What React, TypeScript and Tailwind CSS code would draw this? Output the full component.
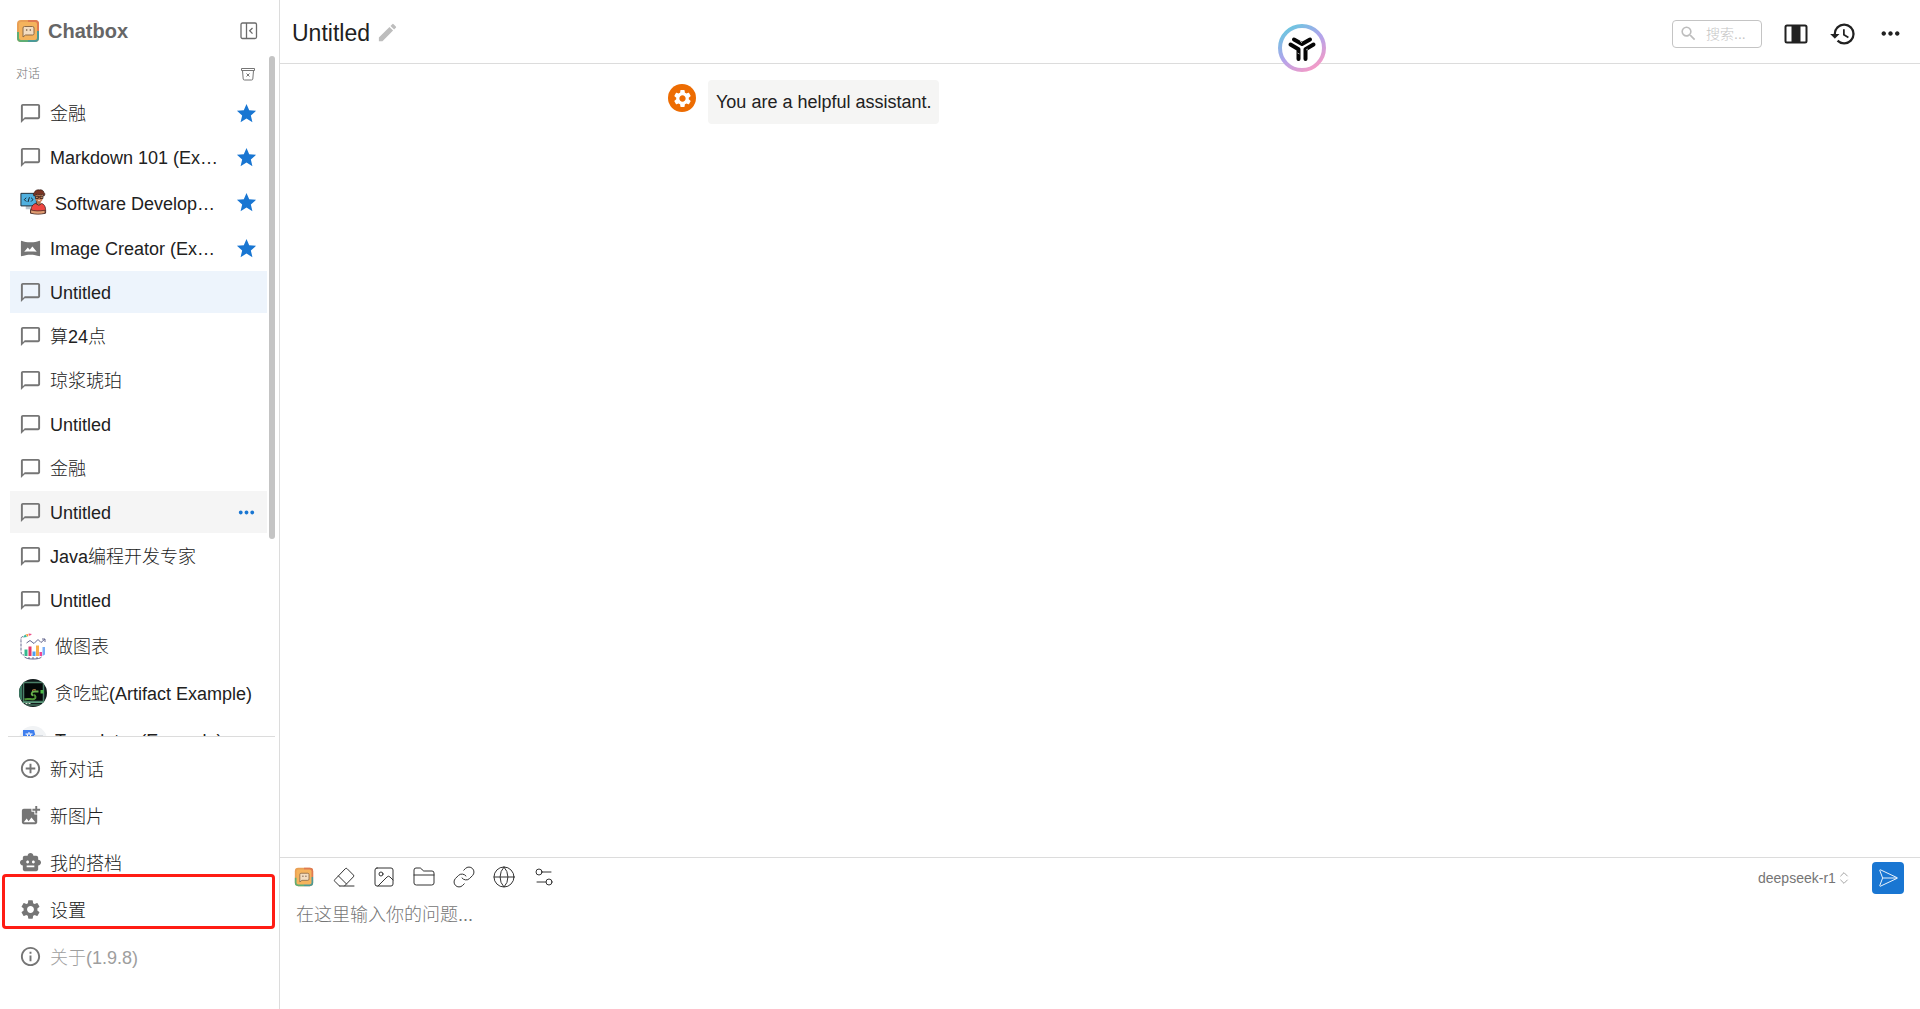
import { useState } from "react";
import clsx from "clsx";
import {
  ChevronsUpDown,
  FolderClosed,
  Globe,
  Image as ImageIcon,
  Link,
  SendHorizontal,
  Settings2,
} from "lucide-react";
import {
  MdAddCircleOutline,
  MdAddPhotoAlternate,
  MdEdit,
  MdHistory,
  MdInfoOutline,
  MdMoreHoriz,
  MdOutlineChatBubbleOutline,
  MdSearch,
  MdSettings,
  MdSmartToy,
  MdStar,
  MdVrpano,
} from "react-icons/md";

type SessionIcon = "chat" | "picture" | "developer" | "chart" | "snake" | "translate";

interface Session {
  id: number;
  name: string;
  icon: SessionIcon;
  starred?: boolean;
}

const SESSIONS: Session[] = [
  { id: 1, name: "金融", icon: "chat", starred: true },
  { id: 2, name: "Markdown 101 (Example)", icon: "chat", starred: true },
  { id: 3, name: "Software Developer (Example)", icon: "developer", starred: true },
  { id: 4, name: "Image Creator (Example)", icon: "picture", starred: true },
  { id: 5, name: "Untitled", icon: "chat" },
  { id: 6, name: "算24点", icon: "chat" },
  { id: 7, name: "琼浆琥珀", icon: "chat" },
  { id: 8, name: "Untitled", icon: "chat" },
  { id: 9, name: "金融", icon: "chat" },
  { id: 10, name: "Untitled", icon: "chat" },
  { id: 11, name: "Java编程开发专家", icon: "chat" },
  { id: 12, name: "Untitled", icon: "chat" },
  { id: 13, name: "做图表", icon: "chart" },
  { id: 14, name: "贪吃蛇(Artifact Example)", icon: "snake" },
  { id: 15, name: "Translator (Example)", icon: "translate" },
];

const MENU = [
  { label: "新对话", Icon: MdAddCircleOutline },
  { label: "新图片", Icon: MdAddPhotoAlternate },
  { label: "我的搭档", Icon: MdSmartToy },
  { label: "设置", Icon: MdSettings, marked: true },
  { label: "关于(1.9.8)", Icon: MdInfoOutline, muted: true },
];

function Logo({ size }: { size: number }) {
  return (
    <svg width={size} height={size} viewBox="0 0 24 24" fill="none" aria-hidden="true">
      <rect x="1" y="1" width="22" height="22" rx="4" fill="#e9a055" />
      <path d="M12 1h7a4 4 0 0 1 4 4v7h-4V5h-7z" fill="#df7a52" />
      <path d="M1 13h3v7h8v3H5a4 4 0 0 1-4-4z" fill="#5fae74" />
      <path d="M12 20h8v-8h3v7a4 4 0 0 1-4 4h-7z" fill="#4a9a98" />
      <rect x="3" y="3" width="18" height="18" rx="2" fill="#f5b35c" />
      <path
        d="M8.500 7.500h8a1.500 1.500 0 0 1 1.500 1.500v5.500a1.500 1.500 0 0 1-1.500 1.500H9.500L7 18V9a1.500 1.500 0 0 1 1.500-1.500z"
        fill="#f3dcc0"
        stroke="#8c6a48"
      />
      <circle cx="10.700" cy="11" r=".8" fill="#6b5038" />
      <circle cx="14.300" cy="11" r=".8" fill="#6b5038" />
    </svg>
  );
}

function CollapseIcon() {
  return (
    <svg width="18" height="18" viewBox="0 0 18 18" fill="none" stroke="#6b6b6b" strokeWidth="1.300" aria-hidden="true">
      <rect x="1" y="1" width="15.500" height="15.500" rx="1.500" />
      <path d="M6.500 1v15.500" />
      <path d="m12.500 6-2.800 2.800 2.800 2.800" />
    </svg>
  );
}

function ClearIcon() {
  return (
    <svg width="16" height="16" viewBox="0 0 16 16" fill="none" stroke="#757575" aria-hidden="true">
      <path d="M1.500 2.500h13v2h-13z" />
      <path d="m2.500 4.500.7 8.500a1.200 1.200 0 0 0 1.200 1h7.200a1.200 1.200 0 0 0 1.200-1l.7-8.500" />
      <path d="m6.500 7.500 3 3m0-3-3 3" />
    </svg>
  );
}

function EraserIcon() {
  return (
    <svg width="24" height="24" viewBox="0 0 24 24" fill="none" stroke="currentColor" strokeLinejoin="round" strokeLinecap="round" aria-hidden="true">
      <path d="M7.500 21 2.700 16.200a1 1 0 0 1 0-1.400L13.300 3.700a1.300 1.300 0 0 1 1.800 0l6.300 6.300a1.300 1.300 0 0 1 0 1.800L12.500 21" />
      <path d="M22 21H7.500M6.500 11l8 8" />
    </svg>
  );
}

function ColumnsIcon() {
  return (
    <svg width="24" height="20" viewBox="0 0 24 20" fill="none" aria-hidden="true">
      <rect x="1.500" y="1.500" width="21" height="17" rx="1.500" stroke="#212121" strokeWidth="2" />
      <path d="M7.500 1.500h9v17h-9z" fill="#212121" />
    </svg>
  );
}

function DeveloperAvatar() {
  return (
    <svg width="28" height="28" viewBox="-1 0 29 29" aria-hidden="true">
      <path d="M6 17h5v4H6z" fill="#b9c4cc" />
      <path d="M1 4.500h16v13H1z" fill="#4fb0df" stroke="#1d2a35" strokeWidth="1" />
      <path d="m6.500 9-2 2 2 2m5-4 2 2-2 2M9.800 8.500l-1.500 5" fill="none" stroke="#15242f" />
      <path d="M17.500 12h4v5h-4z" fill="#b9744c" />
      <path d="M11 25c0-6 2-9.500 5.500-10l3 2 3-2c3.500 1 4.500 5 4 10z" fill="#ef4540" stroke="#331a18" strokeWidth=".8" />
      <path d="M11 21.500c4 1.500 9 1.500 15 .5v3.200c-5 1.200-10 1.300-15-.2z" fill="#e09c72" stroke="#331a18" strokeWidth=".7" />
      <path d="M16 5.500h7.500V10c0 2-1.700 3.500-3.700 3.500S16 12 16 10z" fill="#c9825a" />
      <path d="M15 7.500c-1.500-1-1.500-3 0-4C15.500 1.500 18 .5 20 1c2-.7 4.500.5 4.700 2.500 1.500 1 1.300 3-.2 4l-1-2c-2.500.7-5 .5-7 0z" fill="#7a3524" stroke="#2c1712" strokeWidth=".7" />
      <path d="M16 7.500h3v2.300h-3zm4.800 0h3v2.300h-3zM19 8.200h1.800" fill="none" stroke="#261611" strokeWidth=".8" />
      <path d="M18.700 11.600q1.200.8 2.400 0" fill="none" stroke="#fff" strokeWidth=".8" />
    </svg>
  );
}

function ChartAvatar() {
  return (
    <svg width="28" height="28" viewBox="0 0 28 28" fill="none" aria-hidden="true">
      <path d="M4 5.500a5 5 0 0 1 2.500-3L8 5z" fill="#3cb9a0" />
      <path d="M6.500 2.500 9.500 2 9 5z" fill="#f59b3c" />
      <path d="m9.500 1.500 3.500.5-2.500 2z" fill="#ec4f8b" />
      <path d="M4 4.500C1.500 5 2 7 2 10v8c0 3 0 5 3 5" stroke="#66698f" strokeDasharray="3 1" />
      <path d="M7.500 11 11 8.500l4 3 4-4 3 3 4-3.500m-3 0h3v3" stroke="#66698f" />
      <path d="M5.500 17.500h3V24h-3z" fill="#35b88e" />
      <path d="M9.500 14.500h3V24h-3z" fill="#e5396d" />
      <path d="M13.500 19.500h3V24h-3z" fill="#4d9ff0" />
      <path d="M17 13.500h3V24h-3z" fill="#f8b04b" />
      <path d="M20.500 20h2.500v4h-2.500z" fill="#ee4793" />
      <path d="M23.500 15h2.500v7.500l-2.500 1.500z" fill="#78aef8" />
      <path d="M5.500 25c2 1.500 4 2 8.500 2s7-.5 8.500-2M10 25v2m4-2v2m4-2v2" stroke="#66698f" />
    </svg>
  );
}

function SnakeAvatar() {
  return (
    <svg width="28" height="28" viewBox="0 0 28 28" aria-hidden="true">
      <defs>
        <clipPath id="snake-clip">
          <circle cx="14" cy="14" r="14" />
        </clipPath>
      </defs>
      <g clipPath="url(#snake-clip)">
        <path d="M0 0h28v28H0z" fill="#10191a" />
        <path d="M4.500 3.500h20v19h-20z" fill="#040808" stroke="#4b7f68" strokeWidth="1.500" />
        <path d="M0 6h3v15H0z" fill="#3b7a62" />
        <path d="M0 23.500h28M3 26h22" stroke="#5d9b7c" />
        <path d="M5.500 20.500c3-1.500 7 .5 9.500-.5s1.500-3.500 0-4" fill="none" stroke="#4f9438" strokeWidth="2" />
        <path d="M14.500 16.500c-3-1-2-4 1-4h4" fill="none" stroke="#67b04a" strokeWidth="1.800" />
        <path d="M13 11.500q2-1.500 4-.5" fill="none" stroke="#c9874a" />
        <path d="M21.500 11h3v3.500h-3z" fill="#4bb946" />
        <path d="M6.500 24.500h2m1 0h2" stroke="#d7e8d9" strokeWidth="1.200" />
      </g>
    </svg>
  );
}

function TranslateAvatar() {
  return (
    <svg width="28" height="28" viewBox="0 0 28 28" fill="none" aria-hidden="true">
      <circle cx="14" cy="14" r="14" fill="#f1f3f5" />
      <path d="M4 4h11l4 16H4z" fill="#3f7fee" />
      <path d="M6.500 8h7M10 6v2m2 0c-.5 3-3 5-5 6m1-6c.5 3 3 5 5 6" stroke="#fff" />
      <path d="M15 9h9v15h-7z" fill="#d5d9df" />
    </svg>
  );
}

function SessionGlyph({ icon }: { icon: SessionIcon }) {
  if (icon === "developer") return <DeveloperAvatar />;
  if (icon === "chart") return <ChartAvatar />;
  if (icon === "snake") return <SnakeAvatar />;
  if (icon === "translate") return <TranslateAvatar />;
  if (icon === "picture") return <MdVrpano size={23} className="text-[#757575]" />;
  return <MdOutlineChatBubbleOutline size={23} className="text-[#757575]" />;
}

function SessionRow({
  session,
  selected,
  hovered,
  onSelect,
}: {
  session: Session;
  selected: boolean;
  hovered: boolean;
  onSelect: () => void;
}) {
  const hasAvatar = !["chat", "picture"].includes(session.icon);
  return (
    <li
      className={clsx(
        "flex items-center pr-[9px]",
        hasAvatar ? "h-[45px]" : "h-[42px]",
        selected && "bg-[#edf4fc]",
        hovered && "bg-[#f5f5f5]"
      )}
    >
      <button
        type="button"
        onClick={onSelect}
        className="flex h-full min-w-0 flex-1 items-center gap-2 pl-[9px] text-left"
      >
        <span className="shrink-0">
          <SessionGlyph icon={session.icon} />
        </span>
        <span className="truncate pt-0.5">{session.name}</span>
      </button>
      {session.starred && (
        <button type="button" aria-label="取消收藏" className="ml-2.5 text-[#1976d2]">
          <MdStar size={23} />
        </button>
      )}
      {hovered && (
        <button type="button" aria-label="更多" className="ml-2.5 text-[#1976d2]">
          <MdMoreHoriz size={23} />
        </button>
      )}
    </li>
  );
}

function Sidebar() {
  const [current, setCurrent] = useState(5);

  return (
    <aside className="flex w-[280px] shrink-0 flex-col border-r border-[#dcdcdc]">
      <div className="flex h-14 shrink-0 items-center pt-1.5 pr-[21px] pl-4">
        <Logo size={24} />
        <span className="ml-2 text-xl font-bold text-[#666]">Chatbox</span>
        <button type="button" aria-label="收起侧边栏" className="ml-auto">
          <CollapseIcon />
        </button>
      </div>

      <div className="flex min-h-0 flex-1 pr-1">
        <div className="min-w-0 flex-1 overflow-hidden pr-0.5 pl-2.5">
          <div className="flex h-9 items-center pr-[11px] pl-1.5 text-xs text-[#757575]">
            <span>对话</span>
            <button type="button" aria-label="清空对话" className="ml-auto">
              <ClearIcon />
            </button>
          </div>
          <ul className="flex flex-col gap-0.5">
            {SESSIONS.map((s) => (
              <SessionRow
                key={s.id}
                session={s}
                selected={s.id === current}
                hovered={s.id === 10}
                onSelect={() => setCurrent(s.id)}
              />
            ))}
          </ul>
        </div>
        {/* scroll thumb */}
        <div className="w-1.5 shrink-0">
          <div className="h-[71%] rounded-full bg-[#c4c4c4]" />
        </div>
      </div>

      <nav className="mr-1 ml-2 shrink-0 border-t border-[#dcdcdc] pt-2 pb-[29px]">
        {MENU.map(({ label, Icon, marked, muted }) => (
          <div key={label} className="relative">
            <button type="button" className="flex h-[47px] w-full items-center gap-2 pl-[11px] text-left">
              <Icon size={23} className="text-[#757575]" />
              <span className={clsx("pt-0.5", muted && "text-[#9e9e9e]")}>{label}</span>
            </button>
            {marked && (
              <div className="pointer-events-none absolute -top-3 right-0 bottom-1 -left-1.5 rounded-sm border-3 border-[#ff1c14]" />
            )}
          </div>
        ))}
      </nav>
    </aside>
  );
}

function FloatingBadge() {
  return (
    <svg
      className="absolute top-6 left-[61%] -translate-x-0.5"
      width="48"
      height="48"
      viewBox="0 0 48 48"
      fill="none"
      aria-hidden="true"
    >
      <defs>
        <linearGradient id="ring" x1="10" y1="4" x2="36" y2="44" gradientUnits="userSpaceOnUse">
          <stop stopColor="#6cc5e0" />
          <stop offset=".5" stopColor="#b0a4ec" />
          <stop offset="1" stopColor="#f29bc8" />
        </linearGradient>
      </defs>
      <circle cx="24" cy="24" r="22" fill="#fff" stroke="url(#ring)" strokeWidth="4" />
      <g stroke="#050505" strokeWidth="4" strokeLinecap="round" strokeLinejoin="round">
        <path d="m16 15.500 8 4.500 8-4.500" />
        <path d="m12.500 20.500 8 4.800V35" />
        <path d="m35.500 20.500-8 4.800V35" />
      </g>
      <path d="m22 17 2 2M19.500 29l2 1M28 26l2-1" stroke="#fff" strokeWidth=".6" />
    </svg>
  );
}

function Header() {
  return (
    <header className="relative flex h-16 shrink-0 items-center border-b border-[#dcdcdc] pt-0.5 pr-4 pl-3">
      <h1 className="text-[23px] text-[#212121]">Untitled</h1>
      <button type="button" aria-label="重命名" className="ml-1.5 text-[#bdbdbd]">
        <MdEdit size={23} />
      </button>
      <FloatingBadge />
      <div className="ml-auto flex items-center pt-0.5">
        <label className="mr-[22px] flex h-7 w-[90px] items-center rounded-[4px] border border-[#c4c4c4] pl-1.5">
          <MdSearch size={19} className="shrink-0 text-[#bdbdbd]" />
          <input
            type="search"
            aria-label="搜索"
            placeholder="搜索..."
            className="ml-2 w-full min-w-0 text-sm outline-none placeholder:text-[#c4c4c4]"
          />
        </label>
        <button type="button" aria-label="布局" className="mr-[21px]">
          <ColumnsIcon />
        </button>
        <button type="button" aria-label="历史" className="mr-5 text-[#212121]">
          <MdHistory size={28} />
        </button>
        <button type="button" aria-label="更多" className="text-[#212121]">
          <MdMoreHoriz size={27} />
        </button>
      </div>
    </header>
  );
}

function Composer() {
  const [text, setText] = useState("");
  const tools = [
    { label: "Chatbox", icon: <Logo size={20} /> },
    { label: "清除", icon: <EraserIcon /> },
    { label: "图片", icon: <ImageIcon size={24} strokeWidth={1} /> },
    { label: "文件", icon: <FolderClosed size={24} strokeWidth={1} /> },
    { label: "链接", icon: <Link size={24} strokeWidth={1} /> },
    { label: "联网", icon: <Globe size={24} strokeWidth={1} /> },
    { label: "设置", icon: <Settings2 size={24} strokeWidth={1} /> },
  ];

  return (
    <form
      className="flex h-38 shrink-0 flex-col border-t border-[#dcdcdc] pr-4 pl-3"
      onSubmit={(e) => e.preventDefault()}
    >
      <div className="flex items-center pt-1">
        <div className="flex gap-4 pb-0.5 text-[#333]">
          {tools.map((t) => (
            <button key={t.label} type="button" aria-label={t.label} className="flex size-6 items-center justify-center">
              {t.icon}
            </button>
          ))}
        </div>
        <div className="relative mr-5 ml-auto flex items-center text-sm text-[#757575]">
          <select aria-label="模型" className="appearance-none pr-4 outline-none">
            <option>deepseek-r1</option>
          </select>
          <ChevronsUpDown size={16} strokeWidth={1} className="pointer-events-none absolute right-0" />
        </div>
        <button
          type="submit"
          aria-label="发送"
          className="flex size-8 items-center justify-center rounded-[4px] bg-[#1976d2] text-white"
        >
          <SendHorizontal size={22} strokeWidth={1} />
        </button>
      </div>
      <textarea
        aria-label="输入"
        value={text}
        onChange={(e) => setText(e.target.value)}
        placeholder="在这里输入你的问题..."
        className="mt-[7px] w-full flex-1 resize-none pl-1 outline-none placeholder:text-[#757575]"
      />
    </form>
  );
}

export default function App() {
  return (
    <div className="flex h-screen overflow-hidden bg-white font-['Liberation_Sans','Noto_Sans_CJK_SC',sans-serif] text-[18px] leading-7 font-light text-[#212121]">
      <Sidebar />
      <main className="flex min-w-0 flex-1 flex-col">
        <Header />
        <div className="min-h-0 flex-1 overflow-y-auto pt-4">
          <div className="mx-auto flex w-full max-w-[864px] items-start gap-3">
            <div className="mt-1 flex size-7 shrink-0 items-center justify-center rounded-full bg-[#ed6c02]">
              <MdSettings size={21} className="text-white" />
            </div>
            <p className="rounded-[4px] bg-[#f5f5f4] px-2 py-2">You are a helpful assistant.</p>
          </div>
        </div>
        <Composer />
      </main>
    </div>
  );
}
